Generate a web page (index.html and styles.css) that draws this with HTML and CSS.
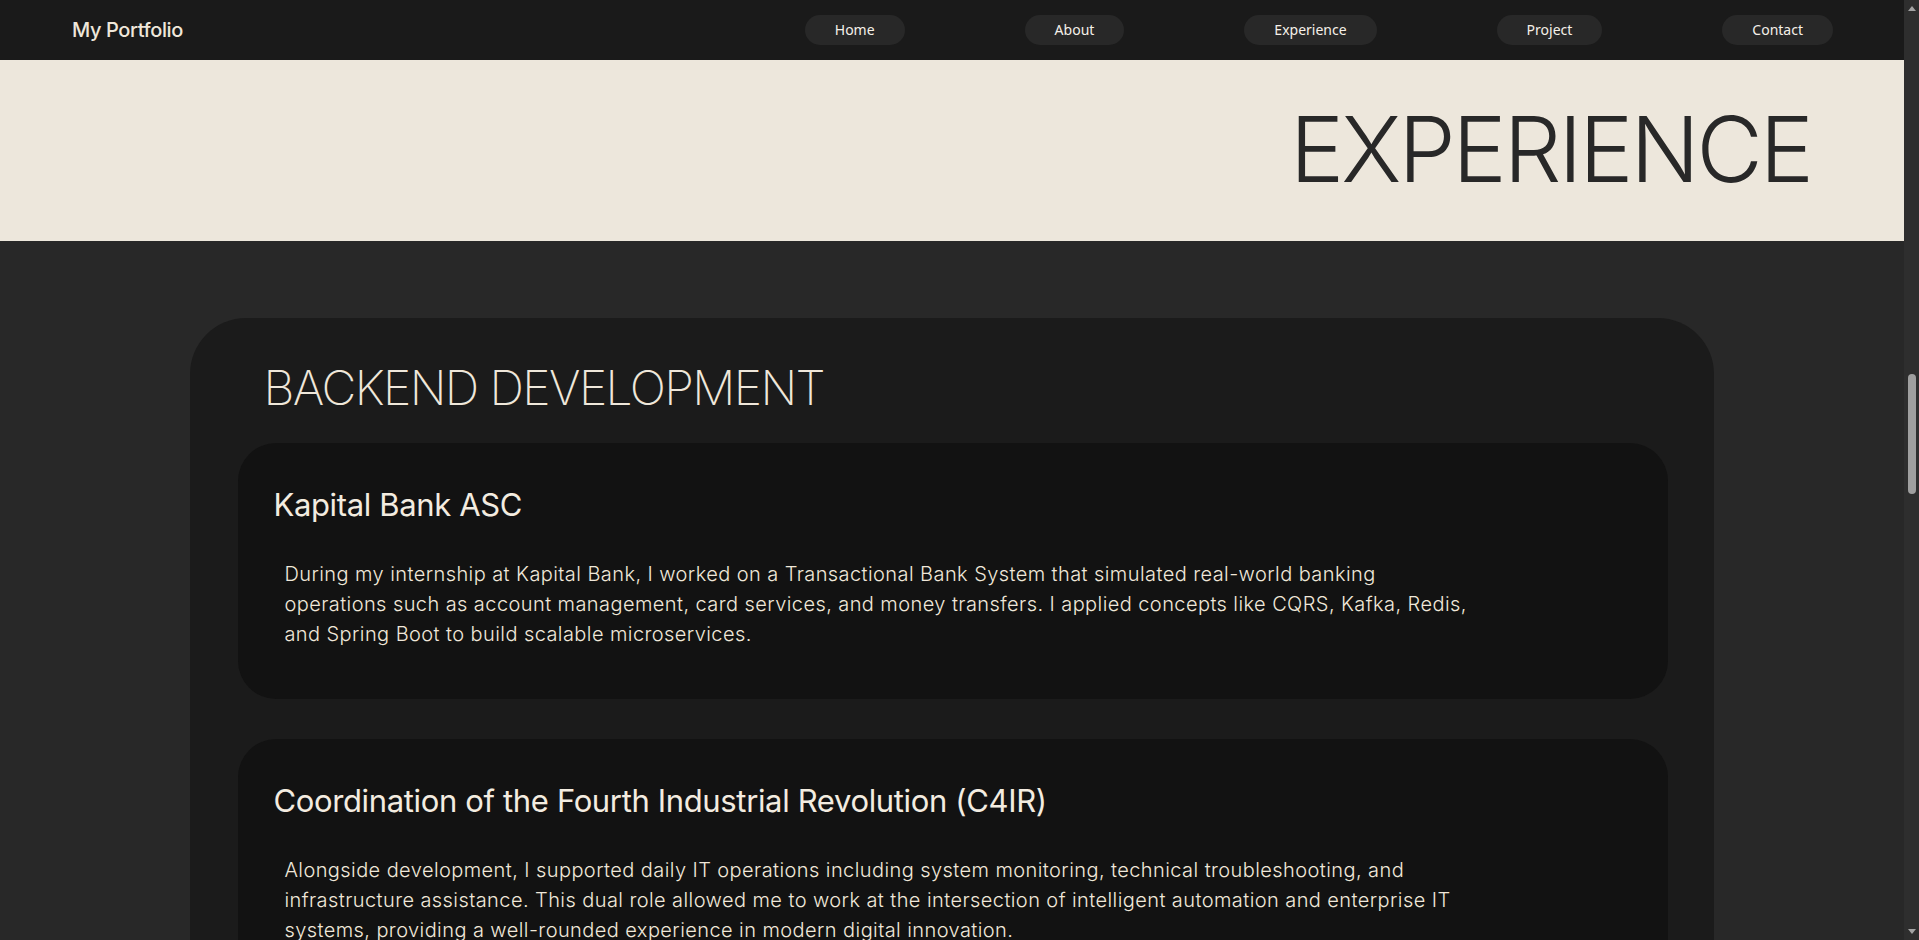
FILE: index.html
```html
<!DOCTYPE html>
<html lang="en">
<head>
<meta charset="utf-8">
<title>My Portfolio - Experience</title>
<link rel="stylesheet" href="styles.css">
</head>
<body>
<div class="page">
  <div class="viewport">
    <header class="nav">
      <div class="logo">My Portfolio</div>
      <ul class="menu">
        <li><a href="#">Home</a></li>
        <li><a href="#">About</a></li>
        <li><a href="#">Experience</a></li>
        <li><a href="#">Project</a></li>
        <li><a href="#">Contact</a></li>
      </ul>
    </header>
    <section class="banner">
      <h1 class="banner-title">EXPERIENCE</h1>
    </section>
    <section class="experience">
      <div class="card">
        <h2 class="card-title">BACKEND DEVELOPMENT</h2>
        <div class="jobs">
          <article class="job">
            <h3 class="job-title">Kapital Bank ASC</h3>
            <p class="job-text">During my internship at Kapital Bank, I worked on a Transactional Bank System that simulated real-world banking operations such as account management, card services, and money transfers. I applied concepts like CQRS, Kafka, Redis, and Spring Boot to build scalable microservices.</p>
          </article>
          <article class="job">
            <h3 class="job-title">Coordination of the Fourth Industrial Revolution (C4IR)</h3>
            <p class="job-text">Alongside development, I supported daily IT operations including system monitoring, technical troubleshooting, and infrastructure assistance. This dual role allowed me to work at the intersection of intelligent automation and enterprise IT systems, providing a well-rounded experience in modern digital innovation.</p>
          </article>
        </div>
      </div>
    </section>
  </div>
  <div class="scrollbar">
    <span class="arrow arrow-up"></span>
    <span class="thumb"></span>
    <span class="arrow arrow-down"></span>
  </div>
</div>
</body>
</html>
```

FILE: styles.css
```css
html, body {
  margin: 0;
  padding: 0;
  height: 940px;
  overflow: hidden;
  background: #282828;
}

.page {
  display: flex;
  height: 940px;
}

.viewport {
  flex: 1;
  min-width: 0;
  overflow: hidden;
  background: #282828;
}

/* NAV */
.nav {
  display: flex;
  align-items: center;
  justify-content: space-between;
  height: 60px;
  padding: 0 71px 0 72px;
  background: #1a1a1a;
}

.logo {
  font-family: Inter, "Open Sans", sans-serif;
  font-weight: 500;
  font-size: 20px;
  color: #efe7da;
  letter-spacing: -0.4px;
}

.menu {
  display: flex;
  gap: 120px;
  list-style: none;
  margin: 0;
  padding: 0;
}

.menu a {
  display: block;
  height: 30px;
  line-height: 30px;
  padding: 0 30px;
  border-radius: 15px;
  background: #282828;
  color: #f5f0e8;
  font-family: "Noto Sans", "Liberation Sans", sans-serif;
  font-size: 14px;
  text-decoration: none;
}

/* BANNER */
.banner {
  display: flex;
  align-items: center;
  justify-content: flex-end;
  height: 181px;
  padding-right: 96px;
  background: #ede7dc;
}

.banner-title {
  margin: 0 -3px 2px 0;
  font-family: Inter, "Open Sans", sans-serif;
  font-weight: 300;
  font-size: 91px;
  line-height: 1;
  letter-spacing: -3px;
  color: #282828;
}

/* EXPERIENCE */
.experience {
  padding-top: 77px;
}

.card {
  width: 80%;
  margin: 0 auto;
  box-sizing: border-box;
  padding: 41px 46px 40px 48px;
  background: #1b1b1b;
  border-radius: 56px;
}

.card-title {
  margin: 0 0 26px;
  padding-left: 25px;
  font-family: Inter, "Open Sans", sans-serif;
  font-weight: 200;
  font-size: 48px;
  line-height: 1.2;
  letter-spacing: -1.6px;
  color: #efe7da;
}

.jobs {
  display: flex;
  flex-direction: column;
  gap: 40px;
}

.job {
  padding: 43px 35px 50px 35px;
  background: #121212;
  border-radius: 38px;
}

.job-title {
  margin: 0;
  font-family: Inter, "Open Sans", sans-serif;
  font-weight: 400;
  font-size: 31px;
  line-height: 1.2;
  letter-spacing: -0.35px;
  color: #f3ece0;
}

.job-text {
  max-width: 1190px;
  margin: 36px 0 0;
  padding-left: 11px;
  font-family: Inter, "Open Sans", sans-serif;
  font-weight: 300;
  font-size: 20px;
  line-height: 30px;
  letter-spacing: 0.42px;
  color: #f0e8da;
}

/* SCROLLBAR */
.scrollbar {
  display: flex;
  flex-direction: column;
  align-items: center;
  width: 15px;
  background: #2e2e2e;
}

.arrow {
  width: 0;
  height: 0;
  border-left: 4.5px solid transparent;
  border-right: 4.5px solid transparent;
}

.arrow-up {
  margin-top: 6px;
  border-bottom: 5px solid #a3a3a3;
}

.thumb {
  width: 8px;
  height: 120px;
  margin-top: 363px;
  border-radius: 4px;
  background: #9f9f9f;
}

.arrow-down {
  margin-top: auto;
  margin-bottom: 6px;
  border-top: 5px solid #a3a3a3;
}
```
